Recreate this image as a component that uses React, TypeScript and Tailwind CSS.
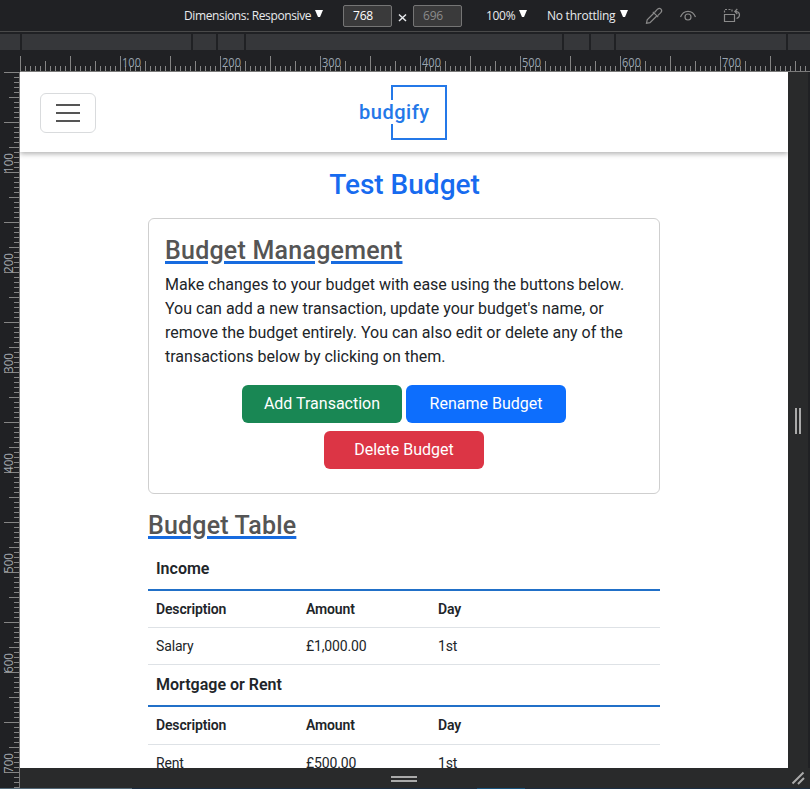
import React from "react";

const px = (n: number) => ({ left: n });

/* Marks every 5 units, medium every 25, long every 50 */
function tickPath(length: number, vertical: boolean) {
  let d = "";
  for (let i = 0; i <= length; i += 5) {
    const size = i % 50 === 0 ? 15 : i % 25 === 0 ? 10 : 5;
    d += vertical ? `M${20 - size} ${i + 0.5}H20` : `M${i + 0.5} ${21 - size}V21`;
  }
  return d;
}

const labels = [100, 200, 300, 400, 500, 600, 700];

function HorizontalRuler() {
  return (
    <div className="flex h-[22px] bg-[#202124]">
      <div className="w-5 shrink-0" />
      <svg width="790" height="22" className="block shrink-0" shapeRendering="crispEdges">
        <path d={tickPath(785, false)} stroke="#858585" strokeWidth="1" />
        <path d="M0 21.5H790" stroke="#7a7a7a" />
        {labels.map((n) => (
          <text key={n} x={n + 2} y="17" fill="#9aa5b0" fontSize="12" fontFamily="'Open Sans', sans-serif" textLength="19" lengthAdjust="spacingAndGlyphs">
            {n}
          </text>
        ))}
      </svg>
    </div>
  );
}

function VerticalRuler() {
  return (
    <svg width="20" height="717" className="block shrink-0 bg-[#202124]" shapeRendering="crispEdges">
      <path d={tickPath(715, true)} stroke="#858585" strokeWidth="1" transform="translate(-1 0)" />
      <path d="M19.5 0V717" stroke="#7a7a7a" />
      {labels.map((n) => (
        <text key={n} transform={`translate(13 ${n + 1}) rotate(-90)`} fill="#a3a9af" fontSize="12" fontFamily="'Open Sans', sans-serif" textLength="20" lengthAdjust="spacingAndGlyphs">
          {n}
        </text>
      ))}
    </svg>
  );
}

function Caret({ className = "" }: { className?: string }) {
  return (
    <svg width="8" height="7" viewBox="0 0 8 7" className={className}>
      <path d="M0 0H8L5 7H3Z" fill="#fff" />
    </svg>
  );
}

function Toolbar() {
  return (
    <div className="flex h-[31px] items-center bg-[#202124] pl-[184px] font-['Open_Sans',sans-serif] text-[12px] leading-none text-[#e8eaed]">
      <div className="flex w-[159px]">
        <span className="w-[128px] whitespace-nowrap tracking-[-0.38px]">Dimensions: Responsive</span>
        <Caret className="ml-[3px]" />
      </div>
      <div className="flex h-[22px] w-[49px] items-center rounded-[2px] border border-[#757575] bg-[#3a3a3b] pl-[9px] tracking-[-0.2px] text-white">768</div>
      <svg width="21" height="22" className="block">
        <path d="M7 9.5L14 16M14 9.5L7 16" stroke="#e8eaed" strokeWidth="1.5" />
      </svg>
      <div className="flex h-[22px] w-[49px] items-center rounded-[2px] border border-[#757575] bg-[#3a3a3b] pl-[9px] tracking-[-0.2px] text-[#8b8b8b]">696</div>
      <div className="ml-6 flex w-[61px]">
        <span className="w-[29px] tracking-[-0.3px]">100%</span>
        <Caret className="ml-1" />
      </div>
      <div className="flex w-[98px]">
        <span className="w-[70px] whitespace-nowrap tracking-[-0.25px]">No throttling</span>
        <Caret className="ml-[3px]" />
      </div>
      <svg width="100" height="22" className="block shrink-0" fill="none" stroke="#8a8a8a" strokeWidth="1.2">
        <path d="M9 8L2.2 14.8L1.5 18.3L5 17.6L12 10.8M7.8 6.8L13.2 12.2M9.5 7.5L12.5 4.2Q14.5 2.5 16 4.2Q17.5 6 15.8 7.6L12.7 10.6" />
        <path d="M35.5 12C38.5 4.5 47.5 4.5 50.5 12" />
        <circle cx="43" cy="12" r="3" />
        <path d="M79.5 9.5H89.5V16.5H79.5Z" />
        <path d="M79.5 7.5V4.5H87V7.5" strokeDasharray="2 1.5" />
        <path d="M90 6.5H91.5Q94.5 7 94.5 10Q94.5 12.5 91.5 13.5M92.3 4L89.8 6.5L92.3 9" />
      </svg>
    </div>
  );
}

function Logo() {
  return (
    <svg width="90" height="58" viewBox="0 0 90 58" className="mt-[2px] block">
      <path d="M33 16V2H87V55H33V40" fill="none" stroke="#2478e8" strokeWidth="2" />
      <text x="0" y="35" fill="#2478e8" fontFamily="Roboto, sans-serif" fontSize="20" fontWeight="500" textLength="70">
        budgify
      </text>
    </svg>
  );
}

type SectionProps = { title: string; name: string; amount: string; className: string };

function Section({ title, name, amount, className }: SectionProps) {
  return (
    <section className={`text-[14px] tracking-[-0.15px] text-[#212529] ${className}`}>
      <h3 className="h-10 border-b-2 border-[#2170c8] px-2 pt-[6px] text-[16px] font-semibold leading-6 tracking-normal">{title}</h3>
      <div className="grid h-[37px] grid-cols-[150px_132px_1fr] items-center border-b border-[#dee2e6] font-semibold [&>span]:pl-2">
        <span>Description</span>
        <span>Amount</span>
        <span>Day</span>
      </div>
      <div className="grid h-[37px] grid-cols-[150px_132px_1fr] items-center border-b border-[#dee2e6] [&>span]:pl-2">
        <span>{name}</span>
        <span>{amount}</span>
        <span>1st</span>
      </div>
    </section>
  );
}

function ActionButton({ color, children }: { color: string; children: React.ReactNode }) {
  return <button className={`h-[38px] w-40 rounded-md text-[16px] text-white ${color}`}>{children}</button>;
}

function BudgetPage() {
  return (
    <main className="h-[696px] w-[768px] shrink-0 overflow-hidden bg-white font-[Roboto,sans-serif] text-[#212529]">
      <header className="grid h-20 grid-cols-[1fr_90px_1fr] items-center border-b border-white shadow-[0_2px_5px_rgba(0,0,0,0.3)]">
        <button className="ml-5 mt-[2px] flex h-10 w-14 flex-col items-center justify-center gap-[6px] rounded-md border border-[#d9dbdd]">
          <span className="h-[2px] w-6 bg-[#555]" />
          <span className="h-[2px] w-6 bg-[#555]" />
          <span className="h-[2px] w-6 bg-[#555]" />
        </button>
        <Logo />
      </header>
      <h1 className="mt-4 h-[50px] pl-px text-center text-[28px] font-medium leading-[33px] text-[#176bef]">Test Budget</h1>
      <div className="mx-auto w-[512px]">
        <section className="h-[276px] rounded-md border border-[#cfcfcf] px-4 pt-4">
          <h2 className="h-[38px] text-[25px] font-medium leading-[31px] tracking-[0.23px] text-[#555] underline decoration-[#176bdf] decoration-[3px]">Budget Management</h2>
          <p className="h-[104px] whitespace-nowrap text-[16px] leading-6">
            Make changes to your budget with ease using the buttons below.<br />
            You can add a new transaction, update your budget's name, or<br />
            remove the budget entirely. You can also edit or delete any of the<br />
            transactions below by clicking on them.
          </p>
          <div className="mt-2 flex flex-wrap justify-center gap-x-1 gap-y-2">
            <ActionButton color="bg-[#198754]">Add Transaction</ActionButton>
            <ActionButton color="bg-[#0d6efd]">Rename Budget</ActionButton>
            <ActionButton color="bg-[#dc3545]">Delete Budget</ActionButton>
          </div>
        </section>
        <h2 className="mt-4 h-[41px] text-[25px] font-medium leading-[31px] tracking-[0.18px] text-[#555] underline decoration-[#176bdf] decoration-[3px]">Budget Table</h2>
        <Section title="Income" name="Salary" amount="£1,000.00" className="" />
        <Section title="Mortgage or Rent" name="Rent" amount="£500.00" className="pt-[2px] [&>div]:h-[38px]" />
      </div>
    </main>
  );
}

export default function App() {
  const stops = [22, 193, 218, 245.5, 564, 591, 616, 788];
  return (
    <div className="h-[789px] w-[810px] overflow-hidden bg-[#202124]">
      <Toolbar />
      <div className="h-[19px] border-t border-[#4a4a4a] pt-[2px]">
        <div className="relative h-4 bg-[#36373a]">
          {stops.map((n) => (
            <i key={n} className="absolute top-0 h-4 w-[2px] -translate-x-[2px] bg-[#202124]" style={px(n)} />
          ))}
        </div>
      </div>
      <HorizontalRuler />
      <div className="flex h-[716px] overflow-hidden">
        <VerticalRuler />
        <div className="w-[768px] shrink-0 bg-[#292a2b]">
          <BudgetPage />
          <div className="flex h-[21px] flex-col items-center gap-[2px] pt-2">
            <span className="h-[2px] w-[26px] bg-[#aaa]" />
            <span className="h-[2px] w-[26px] bg-[#aaa]" />
          </div>
        </div>
        <div className="w-[22px] bg-[#292a2b]">
          <div className="flex h-[696px] items-center justify-center gap-[2px] border-r-2 border-[#202124] pt-[2px]">
            <span className="h-[26px] w-[2px] bg-[#aaa]" />
            <span className="h-[26px] w-[2px] bg-[#aaa]" />
          </div>
          <svg width="22" height="21" className="block">
            <path d="M4.5 15.5L15.5 4.5M10 16L16 10" stroke="#aaa" strokeWidth="2" />
          </svg>
        </div>
      </div>
      <div className="flex h-px bg-[#1b2d42]">
        <span className="h-px w-[132px] bg-[#526878]" />
        <span className="ml-[345px] h-px w-12 bg-[#18527d]" />
      </div>
    </div>
  );
}
